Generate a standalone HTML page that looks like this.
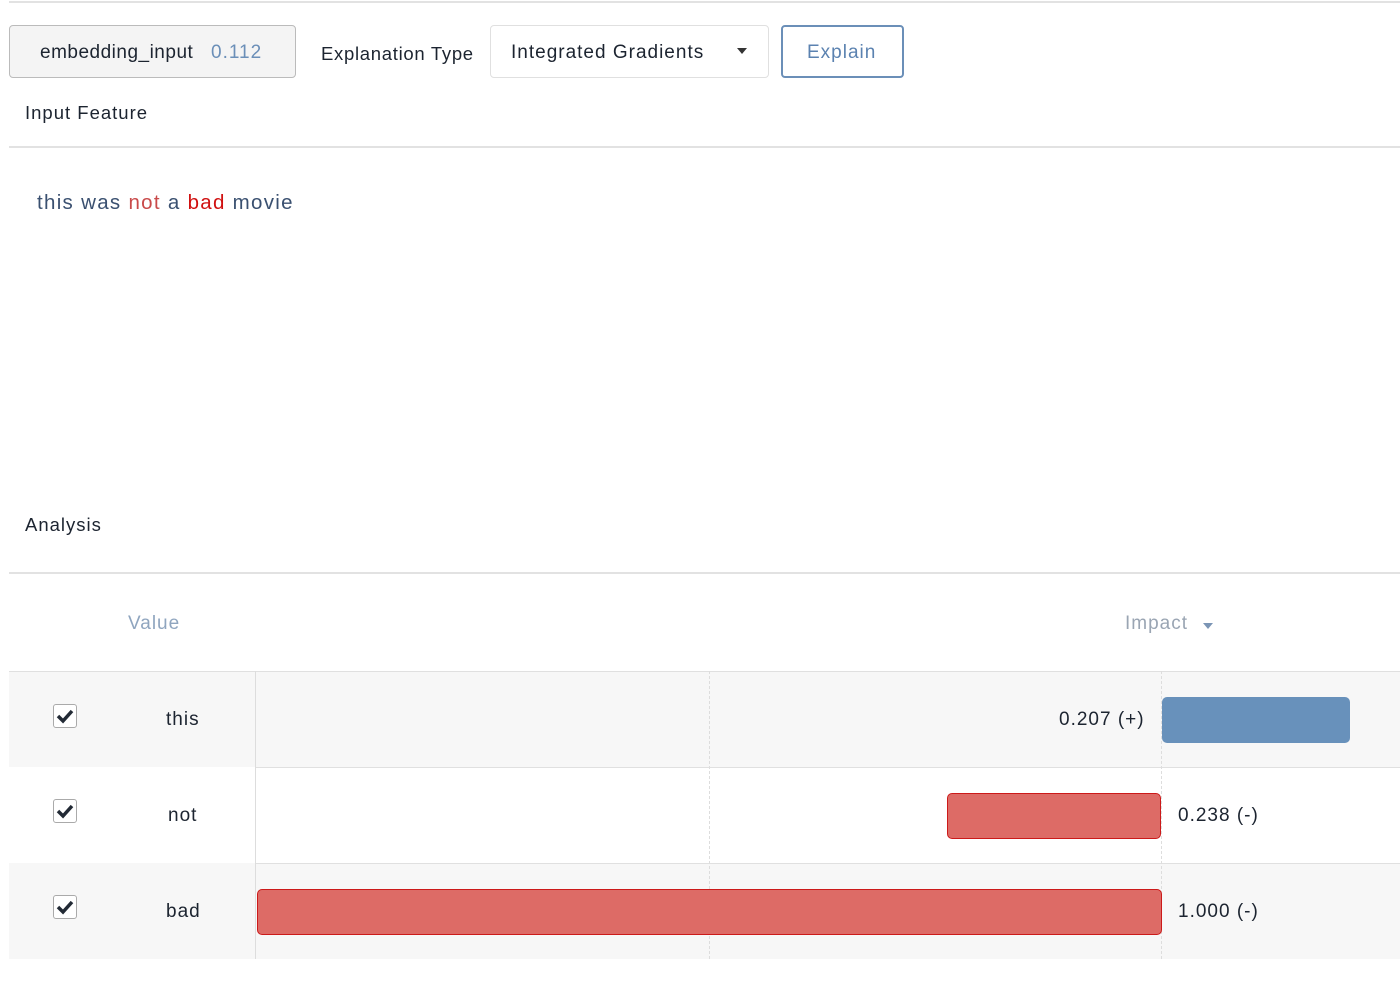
<!DOCTYPE html>
<html><head><meta charset="utf-8"><style>
*{margin:0;padding:0;box-sizing:border-box}
body{width:1400px;height:993px;background:#fff;position:relative;overflow:hidden;font-family:"Liberation Sans",Roboto,sans-serif;color:#1c2430}
.a{position:absolute}
.hl{position:absolute;height:0;border-top:2px solid #e2e2e2}
.t{font-size:19px;white-space:nowrap;letter-spacing:1px}
.row{position:absolute;left:9px;width:1391px;height:96px}
.cb{position:absolute;left:53px;width:24px;height:24px;border:1.5px solid #aaa;border-radius:3px;background:#fff}
.vd{position:absolute;top:671px;height:288px;border-left:1.5px dashed #ddd}
</style></head><body>
<div class="hl" style="left:9px;top:1px;width:1391px"></div>

<div class="a" style="left:9px;top:25px;width:287px;height:53px;background:#f4f4f4;border:1.5px solid #bbb;border-radius:4px"></div>
<div class="a t" style="left:40px;top:42px;letter-spacing:0.5px">embedding_input</div>
<div class="a t" style="left:211px;top:42px;color:#6b8fb8">0.112</div>

<div class="a t" style="left:321px;top:43px;font-size:18.5px;letter-spacing:0.7px">Explanation Type</div>
<div class="a" style="left:490px;top:25px;width:279px;height:53px;border:1.5px solid #e0e0e0;border-radius:4px"></div>
<div class="a t" style="left:511px;top:42px">Integrated Gradients</div>
<svg class="a" style="left:737px;top:48px" width="10" height="6"><path d="M0 0H10L5 6Z" fill="#333"/></svg>

<div class="a" style="left:781px;top:25px;width:123px;height:53px;border:2px solid #6b8fb8;border-radius:4px"></div>
<div class="a t" style="left:807px;top:42px;color:#5b82b0">Explain</div>

<div class="a t" style="left:25px;top:102px;font-size:18.5px">Input Feature</div>
<div class="hl" style="left:9px;top:146px;width:1391px"></div>

<div class="a t" style="left:37px;top:191px;font-size:20.5px;color:#3a5070;letter-spacing:1.3px">this was <span style="color:#c94a4a">not</span> a <span style="color:#d01010">bad</span> movie</div>

<div class="a t" style="left:25px;top:514px;font-size:18.5px">Analysis</div>
<div class="hl" style="left:9px;top:572px;width:1391px"></div>

<div class="a t" style="left:128px;top:613px;color:#8fa5bf">Value</div>
<div class="a t" style="left:1125px;top:613px;color:#9aa5b3">Impact</div>
<svg class="a" style="left:1203px;top:623px" width="10" height="6"><path d="M0 0H10L5 6Z" fill="#7b95b5"/></svg>

<div class="row" style="top:671px;background:#f7f7f7;border-top:1.5px solid #e0e0e0"></div>
<div class="row" style="top:767px;background:#fff;"></div>
<div class="row" style="top:863px;background:#f7f7f7"></div>
<div class="a" style="left:256px;top:767px;width:1144px;border-top:1.5px solid #e0e0e0"></div>
<div class="a" style="left:256px;top:863px;width:1144px;border-top:1.5px solid #e0e0e0"></div>
<div class="a" style="left:255px;top:671px;height:288px;border-left:1.5px solid #ddd"></div>
<div class="vd" style="left:709px"></div>
<div class="vd" style="left:1161px"></div>

<div class="cb" style="top:704px"></div>
<div class="cb" style="top:799px"></div>
<div class="cb" style="top:895px"></div>
<svg class="a" style="left:56px;top:708px" width="18" height="16"><path d="M2 8L7 13L16 3" stroke="#222a35" stroke-width="3.5" fill="none"/></svg>
<svg class="a" style="left:56px;top:803px" width="18" height="16"><path d="M2 8L7 13L16 3" stroke="#222a35" stroke-width="3.5" fill="none"/></svg>
<svg class="a" style="left:56px;top:899px" width="18" height="16"><path d="M2 8L7 13L16 3" stroke="#222a35" stroke-width="3.5" fill="none"/></svg>

<div class="a t" style="left:166px;top:709px">this</div>
<div class="a t" style="left:168px;top:805px">not</div>
<div class="a t" style="left:166px;top:901px">bad</div>

<div class="a t" style="left:1059px;top:709px">0.207 (+)</div>
<div class="a" style="left:1162px;top:697px;width:188px;height:46px;background:#6891bb;border-radius:5px"></div>

<div class="a" style="left:947px;top:793px;width:214px;height:46px;background:#dd6b66;border:1.5px solid #cc1a1a;border-radius:5px"></div>
<div class="a t" style="left:1178px;top:805px">0.238 (-)</div>

<div class="a" style="left:257px;top:889px;width:905px;height:46px;background:#dd6b66;border:1.5px solid #cc1a1a;border-radius:5px"></div>
<div class="a t" style="left:1178px;top:901px">1.000 (-)</div>
</body></html>
